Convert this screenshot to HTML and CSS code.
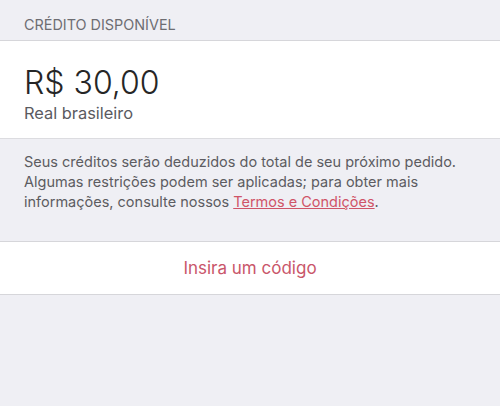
FILE: index.html
```html
<!DOCTYPE html>
<html lang="pt-BR">
<head>
  <meta charset="UTF-8">
  <meta name="viewport" content="width=device-width, initial-scale=1.0">
  <title>Crédito disponível</title>
  <link rel="stylesheet" href="styles.css">
</head>
<body>
  <div class="section-header">Crédito disponível</div>

  <div class="balance">
    <div class="amount">R$ 30,00</div>
    <div class="currency">Real brasileiro</div>
  </div>

  <p class="note">
    Seus créditos serão deduzidos do total de seu próximo pedido.
    Algumas restrições podem ser aplicadas; para obter mais
    informações, consulte nossos <a href="#">Termos e Condições</a>.
  </p>

  <div class="action-row">
    <button type="button" class="code-btn">Insira um código</button>
  </div>
</body>
</html>
```

FILE: styles.css
```css
body {
  font-family: Inter, "Liberation Sans", sans-serif;
  margin: 0;
  padding: 0;
  background-color: #efeff4;
  color: #1c1c1e;
}

.section-header {
  height: 41px;
  box-sizing: border-box;
  padding: 16px 24px 0;
  font-size: 14.4px;
  line-height: 17px;
  text-transform: uppercase;
  color: #6d6d72;
  border-bottom: 1px solid #d6d6da;
}

.balance {
  background: #fff;
  height: 98px;
  box-sizing: border-box;
  padding: 22px 24px 0;
  border-bottom: 1px solid #dcdce0;
}

.amount {
  font-size: 32px;
  font-weight: 300;
  line-height: 40px;
  color: #262626;
}

.currency {
  font-size: 16.4px;
  line-height: 20px;
  color: #5a5a5f;
}

.note {
  margin: 0;
  padding: 13px 24px 0;
  height: 102px;
  box-sizing: border-box;
  font-size: 14.5px;
  line-height: 20px;
  color: #5c5c61;
}

.note a {
  color: #cf5468;
  text-decoration: underline;
}

.action-row {
  background: #fff;
  border-top: 1px solid #d6d6da;
  border-bottom: 1px solid #d6d6da;
}

.code-btn {
  display: block;
  width: 100%;
  height: 52px;
  padding: 0;
  border: none;
  background: none;
  font-family: inherit;
  font-size: 17px;
  color: #c9566a;
  cursor: pointer;
}
```
